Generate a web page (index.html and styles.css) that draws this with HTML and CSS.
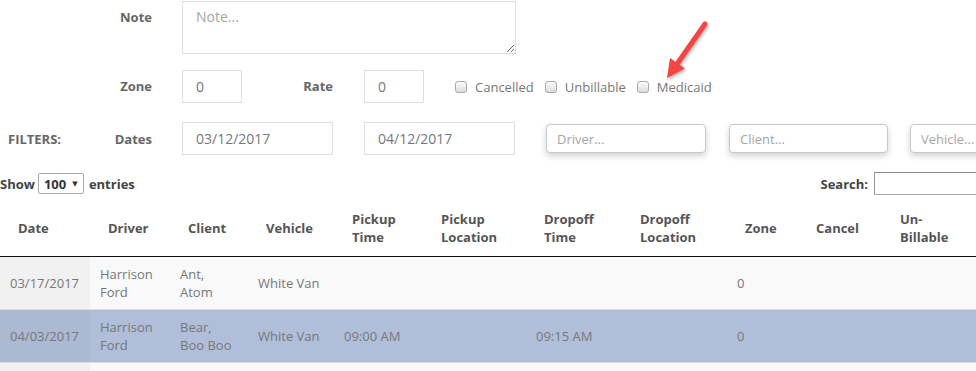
FILE: index.html
```html
<!DOCTYPE html>
<html lang="en">
<head>
  <meta charset="UTF-8">
  <title>Trips</title>
  <link rel="stylesheet" href="styles.css">
</head>
<body>

  <form class="trip-form">
    <div class="form-row">
      <label class="lbl">Note</label>
      <textarea class="ctl note" placeholder="Note..."></textarea>
    </div>

    <div class="form-row row-zone">
      <label class="lbl">Zone</label>
      <input type="text" class="ctl small" value="0">
      <label class="lbl lbl-rate">Rate</label>
      <input type="text" class="ctl small rate" value="0">
      <div class="checks">
        <label class="chk"><input type="checkbox"> Cancelled</label>
        <label class="chk"><input type="checkbox"> Unbillable</label>
        <label class="chk"><input type="checkbox"> Medicaid</label>
      </div>
    </div>

    <div class="form-row row-filters">
      <div class="lbl lbl-filters"><span>FILTERS:</span><span>Dates</span></div>
      <input type="text" class="ctl date" value="03/12/2017">
      <input type="text" class="ctl date date-to" value="04/12/2017">
      <input type="text" class="pick driver" placeholder="Driver...">
      <input type="text" class="pick client" placeholder="Client...">
      <input type="text" class="pick vehicle" placeholder="Vehicle...">
    </div>
  </form>

  <div class="dt-top">
    <div class="dt-length">
      Show
      <span class="dt-select">100 <i>&#9660;</i></span>
      entries
    </div>
    <div class="dt-search">
      Search: <input type="search">
    </div>
  </div>

  <table class="trips">
    <colgroup>
      <col style="width:90px">
      <col style="width:80px">
      <col style="width:78px">
      <col style="width:86px">
      <col style="width:89px">
      <col style="width:103px">
      <col style="width:96px">
      <col style="width:105px">
      <col style="width:71px">
      <col style="width:84px">
      <col style="width:100px">
    </colgroup>
    <thead>
      <tr>
        <th>Date</th>
        <th>Driver</th>
        <th>Client</th>
        <th>Vehicle</th>
        <th>Pickup Time</th>
        <th>Pickup Location</th>
        <th>Dropoff Time</th>
        <th>Dropoff Location</th>
        <th>Zone</th>
        <th>Cancel</th>
        <th>Un-Billable</th>
      </tr>
    </thead>
    <tbody>
      <tr class="odd">
        <td class="sorted">03/17/2017</td>
        <td>Harrison Ford</td>
        <td>Ant, Atom</td>
        <td>White Van</td>
        <td></td>
        <td></td>
        <td></td>
        <td></td>
        <td>0</td>
        <td></td>
        <td></td>
      </tr>
      <tr class="selected">
        <td class="sorted">04/03/2017</td>
        <td>Harrison Ford</td>
        <td>Bear, Boo Boo</td>
        <td>White Van</td>
        <td>09:00 AM</td>
        <td></td>
        <td>09:15 AM</td>
        <td></td>
        <td>0</td>
        <td></td>
        <td></td>
      </tr>
      <tr class="odd">
        <td class="sorted"></td>
        <td></td>
        <td></td>
        <td></td>
        <td></td>
        <td></td>
        <td></td>
        <td></td>
        <td></td>
        <td></td>
        <td></td>
      </tr>
    </tbody>
  </table>

  <!-- annotation arrow -->
  <svg class="arrow" width="70" height="80" viewBox="650 10 70 80">
    <line x1="705" y1="24" x2="677" y2="64" stroke="#f44444" stroke-width="5" stroke-linecap="round"/>
    <polygon points="667,78 670,58 685,68.5" fill="#f44444"/>
  </svg>

</body>
</html>
```

FILE: styles.css
```css
html, body {
  overflow: hidden;
}

body {
  margin: 0;
  padding-top: 1px;
  font-family: 'Open Sans', 'DejaVu Sans', sans-serif;
  font-size: 13px;
  color: #777;
  background: #fff;
  position: relative;
}

.form-row {
  display: flex;
  align-items: flex-start;
}

.lbl {
  width: 152px;
  flex: none;
  text-align: right;
  padding-top: 7px;
  line-height: 18px;
  font-weight: 700;
  color: #666;
  box-sizing: border-box;
}

.ctl {
  font-family: inherit;
  font-size: 14px;
  color: #777;
  border: 1px solid #dedede;
  border-radius: 0;
  padding: 6px 13px;
  margin: 0 0 0 30px;
  box-sizing: border-box;
  height: 33px;
  outline: none;
  background: #fff;
}

.ctl::placeholder {
  color: #a5a5a5;
}

.note {
  width: 334px;
  height: 53px;
  line-height: 20px;
  padding-top: 5px;
}

.row-zone {
  margin-top: 16px;
}

.small {
  width: 60px;
}

.lbl-rate {
  width: 91px;
}

.rate {
  margin-left: 31px;
}

.checks {
  display: flex;
  align-items: center;
  height: 33px;
  margin-left: 31px;
}

.chk {
  display: flex;
  align-items: center;
  margin-right: 11px;
  color: #777;
}

.chk input {
  -webkit-appearance: none;
  appearance: none;
  width: 12px;
  height: 12px;
  margin: 0 8px 0 0;
  border: 1px solid #a9a9a9;
  border-radius: 3px;
  background: linear-gradient(#fdfdfd, #dcdcdc);
}

.row-filters {
  margin-top: 19px;
}

.lbl-filters {
  display: flex;
  justify-content: space-between;
  padding-left: 8px;
  padding-top: 8px;
}

.date {
  width: 151px;
}

.date-to {
  margin-left: 31px;
}

.pick {
  font-family: inherit;
  font-size: 13px;
  width: 160px;
  height: 29px;
  margin-top: 2px;
  padding: 4px 10px;
  box-sizing: border-box;
  border: 1px solid #c8c8c8;
  border-radius: 4px;
  box-shadow: 0 3px 6px rgba(0, 0, 0, 0.18);
  outline: none;
  background: #fff;
}

.pick::placeholder {
  color: #a5a5a5;
}

.driver { margin-left: 31px; }
.client { margin-left: 23px; width: 159px; }
.vehicle { margin-left: 22px; }

.dt-top {
  display: flex;
  align-items: center;
  width: 1040px;
  margin-top: 17px;
  font-weight: 700;
  color: #444;
}

.dt-length {
  display: flex;
  align-items: center;
}

.dt-select {
  display: inline-flex;
  align-items: center;
  height: 21px;
  width: 46px;
  box-sizing: border-box;
  margin: 0 5px 0 3px;
  padding: 0 0 0 5px;
  border: 1px solid #aaa;
  border-radius: 2px;
  color: #333;
}

.dt-select i {
  font-style: normal;
  font-size: 7px;
  margin-left: 6px;
}

.dt-search {
  margin-left: auto;
  display: flex;
  align-items: center;
}

.dt-search input {
  width: 166px;
  height: 23px;
  margin-left: 6px;
  box-sizing: border-box;
  border: 1px solid #aaa;
  border-top-color: #8c8c8c;
  border-left-color: #999;
  outline: none;
}

.trips {
  table-layout: fixed;
  width: 982px;
  border-collapse: collapse;
  margin-top: 5px;
}

.trips th {
  text-align: left;
  vertical-align: middle;
  padding: 10px 18px;
  line-height: 18px;
  font-weight: 700;
  color: #555;
  border-bottom: 1px solid #111;
  height: 36px;
}

.trips td {
  padding: 8px 10px;
  line-height: 18px;
  height: 36px;
  vertical-align: middle;
  color: #777;
  border-top: 1px solid #ddd;
}

.trips tbody tr:first-child td {
  border-top: none;
}

.trips tr.odd td {
  background: #f9f9f9;
}

.trips tr.odd td.sorted {
  background: #f1f1f1;
}

.trips tr.selected td {
  background: #b0bed9;
  color: #777;
}

.trips tr.selected td.sorted {
  background: #abb9d3;
}

.arrow {
  position: absolute;
  left: 650px;
  top: 10px;
  filter: drop-shadow(1px 2px 1.5px rgba(0, 0, 0, 0.3));
}
```
